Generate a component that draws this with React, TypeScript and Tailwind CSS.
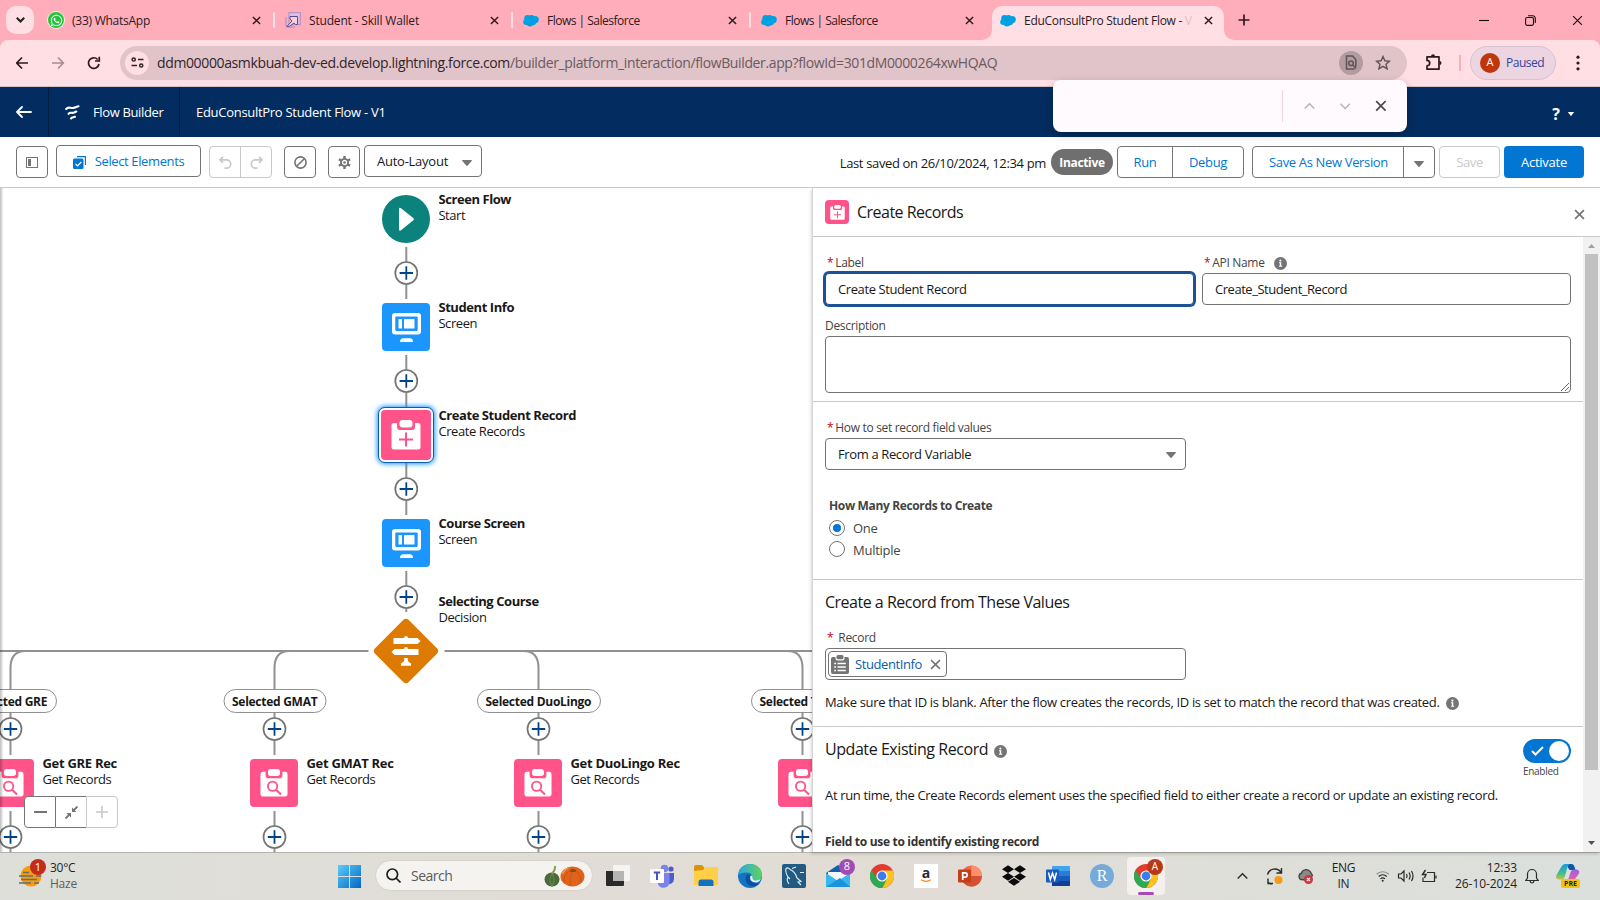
import type { ReactNode } from 'react'
import { FaDropbox, FaWhatsapp } from 'react-icons/fa'

const GREY = '#747474'

/* ---------- shared glyphs ---------- */

function Cross({ size, color, width }: { size: number; color: string; width: number }) {
  return (
    <svg width={size} height={size} viewBox="0 0 10 10" fill="none" stroke={color} strokeWidth={width} className="shrink-0">
      <path d="M1 1l8 8M9 1l-8 8" />
    </svg>
  )
}

function Cloud() {
  return (
    <svg width="16" height="13" viewBox="0 0 16 13" fill="#00a1e0" className="shrink-0">
      <circle cx="4.6" cy="4.3" r="3.3" />
      <circle cx="8.6" cy="4" r="3" />
      <circle cx="12.2" cy="5.6" r="3.6" />
      <circle cx="3.2" cy="7.9" r="3" />
      <circle cx="7" cy="9.2" r="3.3" />
      <circle cx="10" cy="8.3" r="3" />
    </svg>
  )
}

function Down({ color = GREY, w = 10, h = 6 }: { color?: string; w?: number; h?: number }) {
  return (
    <svg width={w} height={h} viewBox="0 0 10 6" preserveAspectRatio="none" className="shrink-0">
      <path d="M.6 0h8.8q.8.2.3.9L5.5 5.7q-.5.5-1 0L.3.9Q-.2.2.6 0z" fill={color} />
    </svg>
  )
}

function Info() {
  return (
    <svg width="13" height="13" viewBox="0 0 13 13" className="shrink-0">
      <circle cx="6.5" cy="6.5" r="6.5" fill={GREY} />
      <circle cx="6.4" cy="3.6" r="1.1" fill="#fff" />
      <path d="M5 5.3h2.300v3.500h.9v1H5V8.800h.8V6.300H5z" fill="#fff" />
    </svg>
  )
}

function Clipboard({ mark, size, bg }: { mark: 'plus' | 'search'; size: number; bg: string }) {
  return (
    <svg width={size} height={size} viewBox="0 0 30 30" className="shrink-0">
      <path d="M3 3h24a2.500 2.500 0 0 1 2.500 2.500v21.500a2.500 2.500 0 0 1-2.500 2.500H3A2.500 2.500 0 0 1 .5 27V5.500A2.500 2.500 0 0 1 3 3z" fill="#fff" />
      <path d="M6 1.500h18v5.500a3 3 0 0 1-3 3H9a3 3 0 0 1-3-3z" fill={bg} />
      <rect x="8.500" y="0" width="13" height="7.500" rx="3.200" fill="#fff" />
      {mark === 'plus' ? (
        <path d="M15 12.500v14M8 19.500h14" stroke={bg} strokeWidth="2" />
      ) : (
        <g stroke={bg} fill="none">
          <circle cx="13.500" cy="18.500" r="5" strokeWidth="2" />
          <path d="M17.200 22.200l5.300 5" strokeWidth="2.200" />
        </g>
      )}
    </svg>
  )
}

/* ---------- browser chrome ---------- */

const tabs: { title: string; width: string; icon: ReactNode; tracking: string }[] = [
  {
    title: '(33) WhatsApp',
    width: 'w-[233px]',
    tracking: 'tracking-[-0.25px]',
    icon: (
      <span className="flex size-4 items-center justify-center rounded-full bg-[#25c43c] text-white ring-1 ring-white/70">
        <FaWhatsapp size={13} />
      </span>
    ),
  },
  {
    title: 'Student - Skill Wallet',
    width: 'w-[238px]',
    tracking: 'tracking-[-0.18px]',
    icon: (
      <svg width="16" height="16" viewBox="0 0 16 16" fill="none" stroke="#5b4a86" strokeWidth="1">
        <rect x="4" y=".7" width="11.300" height="12" fill="#e6bdd6" stroke="#a08fcb" />
        <path d="M1 5v10h9" stroke="#a08ac2" />
        <path d="M2 14.300l5-5.300-2-2V4.500h7.500v8h-2L9 11l-4.500 3.300z" fill="#f7cfdc" />
      </svg>
    ),
  },
  { title: 'Flows | Salesforce', width: 'w-[238px]', tracking: 'tracking-[-0.5px]', icon: <Cloud /> },
  { title: 'Flows | Salesforce', width: 'w-[241px]', tracking: 'tracking-[-0.5px]', icon: <Cloud /> },
]

function TabStrip() {
  return (
    <div className="flex h-10 bg-[#ffadbb] text-[12px] text-[#2c1a1e]">
      <div className="mt-[6px] ml-[6px] flex size-7 shrink-0 items-center justify-center rounded-[10px] bg-[#ffdee4]">
        <svg width="9" height="6" viewBox="0 0 9 6" fill="none" stroke="#1f1f1f" strokeWidth="2">
          <path d="M.8.8l3.700 3.700L8.200.8" />
        </svg>
      </div>
      <div className="flex pl-[8px]">
        {tabs.map((t, i) => (
          <div key={i} className={`${t.width} flex items-center`}>
            <div className={`flex flex-1 items-center ${i === 0 ? 'pl-[6px]' : 'pl-[10px]'} ${i === 3 ? 'pr-[18px]' : 'pr-[12px]'}`}>
              <div className="flex w-4 justify-center">{t.icon}</div>
              <span className={`mt-[2px] ml-[8px] grow ${t.tracking}`}>{t.title}</span>
              <Cross size={9} color="#2c1a1e" width={1.6} />
            </div>
            {i < 3 && <span className="h-4 w-[2px] shrink-0 rounded bg-[#ffdee4]" />}
          </div>
        ))}
      </div>
      <div className="relative mt-[6px] flex h-[34px] w-[232px] items-center rounded-t-[10px] bg-[#ffdee4] pr-[11px] pl-2">
        <svg width="10" height="10" className="absolute bottom-0 -left-[10px]">
          <path d="M10 0v10H0A10 10 0 0 0 10 0z" fill="#ffdee4" />
        </svg>
        <svg width="10" height="10" className="absolute -right-[10px] bottom-0">
          <path d="M0 0v10h10A10 10 0 0 1 0 0z" fill="#ffdee4" />
        </svg>
        <div className="-mt-[6px] flex grow items-center">
          <Cloud />
          <span className="mt-[2px] mr-auto ml-[8px] whitespace-nowrap tracking-[-0.29px]">
            EduConsultPro Student Flow - <span className="text-[#d8c1c6]">V</span>
          </span>
          <Cross size={9} color="#2c1a1e" width={1.6} />
        </div>
      </div>
      <div className="flex grow items-center">
        <svg width="12" height="12" viewBox="0 0 12 12" stroke="#2c1a1e" strokeWidth="1.700" className="ml-[14px]">
          <path d="M6 .5v11M.5 6h11" />
        </svg>
        <div className="ml-auto flex items-center gap-[36px] pr-[17px]">
          <svg width="10" height="10" stroke="#111" strokeWidth="1.100">
            <path d="M0 5.500h10" />
          </svg>
          <svg width="11" height="11" viewBox="0 0 11 11" fill="none" stroke="#111" strokeWidth="1.100">
            <rect x=".6" y="2.500" width="7.900" height="7.900" rx="1.600" />
            <path d="M3 .8h4.800a2.500 2.500 0 0 1 2.500 2.500v4.700" />
          </svg>
          <Cross size={11} color="#111" width={1} />
        </div>
      </div>
    </div>
  )
}

function AddressBar() {
  return (
    <div className="flex h-[47px] items-center rounded-t-[8px] border-b border-[#d3bfc6] bg-[#ffdee4]">
      <svg width="104" height="16" viewBox="0 0 104 16" fill="none" strokeWidth="1.700" className="-mt-px ml-4">
        <path d="M12 8H.8M6 2.500L.7 8 6 13.500" stroke="#2c1a1e" />
        <path d="M36 8h11.200M42 2.500L47.300 8 42 13.500" stroke="#a98c93" />
        <path d="M83 9a5.300 5.300 0 1 1-1.300-4.500M83.300 1.800V6H79" stroke="#2c1a1e" />
      </svg>
      <div className="-mt-px flex h-[34px] w-[1287px] items-center rounded-full bg-[#e0c4c9] pr-[16px] pl-[5px]">
        <div className="flex size-6 items-center justify-center rounded-full bg-[#ffdee4]">
          <svg width="13" height="11" viewBox="0 0 13 11" fill="none" stroke="#33252a" strokeWidth="1.500">
            <circle cx="2.700" cy="2.500" r="1.600" />
            <path d="M7 2.500h5.500M.5 8.500H6" />
            <circle cx="10.200" cy="8.500" r="1.600" />
          </svg>
        </div>
        <span className="ml-[8px] text-[14px] tracking-[-0.37px] whitespace-nowrap text-[#6b5a5e]">
          <span className="text-[#33252a]">ddm00000asmkbuah-dev-ed.develop.lightning.force.com</span>
          /builder_platform_interaction/flowBuilder.app?flowId=301dM0000264xwHQAQ
        </span>
        <div className="ml-auto flex size-6 items-center justify-center rounded-full bg-[#b29ca1]">
          <svg width="12" height="15" viewBox="0 0 12 15" fill="none" stroke="#5f5357" strokeWidth="1.500">
            <path d="M10.800 12V4.500L7.500 1H1.500v13h8" />
            <circle cx="6" cy="8.300" r="2.300" />
            <path d="M7.700 10l3.300 3.500" />
          </svg>
        </div>
        <svg width="16" height="15" viewBox="0 0 16 15" fill="none" stroke="#5f5357" strokeWidth="1.400" className="ml-[12px]">
          <path d="M8 1.500l1.900 4.300 4.600.4-3.500 3 1.100 4.600L8 11.300l-4.100 2.500L5 9.200l-3.500-3 4.600-.4z" />
        </svg>
      </div>
      <svg width="18" height="18" viewBox="0 0 18 18" fill="none" stroke="#2c1a1e" strokeWidth="1.700" className="-mt-[2px] ml-[18px]">
        <path d="M2 3.800h12v12.400H2v-3.400a2.700 2.700 0 0 0 0-5.400z" strokeLinejoin="round" />
        <path d="M6 3.300a2 2 0 0 1 4 0zM14.500 8a2 2 0 0 1 0 4z" fill="#2c1a1e" stroke="none" />
      </svg>
      <span className="ml-[16px] h-4 w-[2px] bg-[#ffadbb]" />
      <div className="-mt-px ml-[9px] flex h-[34px] w-[86px] items-center rounded-full border border-[#d8c1d2] bg-[#ecd4e0] pl-[9px]">
        <span className="flex size-5 items-center justify-center rounded-full bg-[#bf360c] text-[11px] text-white">A</span>
        <span className="ml-[6px] text-[12px] tracking-[-0.5px] text-[#33449c]">Paused</span>
      </div>
      <svg width="4" height="16" fill="#2c1a1e" className="-mt-px ml-[20px]">
        <circle cx="2" cy="2.200" r="1.600" />
        <circle cx="2" cy="8" r="1.600" />
        <circle cx="2" cy="13.800" r="1.600" />
      </svg>
    </div>
  )
}

function FindBar() {
  return (
    <div className="absolute top-[80px] left-[1053px] z-20 flex h-[52px] w-[354px] items-center rounded-[8px] bg-[#fffafe] pl-[229px] shadow-[0_3px_10px_rgba(0,0,0,0.22)]">
      <span className="h-8 w-px bg-[#f6d3db]" />
      <svg width="84" height="12" viewBox="0 0 84 12" fill="none" strokeWidth="1.500" className="ml-[21px]">
        <path d="M.8 8.500L5.500 3.800l4.700 4.700" stroke="#b9b3b7" />
        <path d="M36.500 3.800l4.700 4.700 4.700-4.700" stroke="#b9b3b7" />
        <path d="M72.200 1.200l9.400 9.400M81.600 1.200l-9.400 9.400" stroke="#4c474a" strokeWidth="1.700" />
      </svg>
    </div>
  )
}

/* ---------- builder header and toolbar ---------- */

function Header() {
  return (
    <header className="flex h-[50px] items-stretch bg-[#032d60] text-[13px] text-white">
      <div className="flex w-[49px] items-center justify-center border-r border-[#021d43]">
        <svg width="16" height="12" viewBox="0 0 16 12" fill="none" stroke="#fff" strokeWidth="1.800" strokeLinecap="round" strokeLinejoin="round">
          <path d="M15 6H1M6 1L1 6l5 5" />
        </svg>
      </div>
      <div className="flex w-[131px] items-center border-r border-[#021d43] pl-[16px]">
        <svg width="15" height="15" viewBox="0 0 15 15" fill="none" stroke="#fff" strokeWidth="2.100" strokeLinecap="round">
          <path d="M1.200 4C3.500 1 5.500 3.500 8 3s3.500-1.300 5.500-1.800" />
          <path d="M3.500 8.800c1.600-2 3.200-.6 4.800-1s2-.9 3-1.300" />
          <path d="M6 13.500c1.200-1.500 2-1 4-1.700" />
        </svg>
        <span className="mt-[2px] ml-[13px] tracking-[-0.36px]">Flow Builder</span>
      </div>
      <div className="flex items-center pt-[2px] pl-4 tracking-[-0.29px]">EduConsultPro Student Flow - V1</div>
      <div className="ml-auto flex items-center gap-[8px] pt-[4px] pr-[26px]">
        <span className="text-[16px] font-bold">?</span>
        <Down color="#fff" w={6} h={4} />
      </div>
    </header>
  )
}

const btn = 'flex h-8 items-center justify-center border border-[#747474] bg-white'

function Toolbar() {
  return (
    <div className="flex h-[51px] items-center border-b border-[#c9c9c9] bg-white pr-4 pl-4 text-[13px] tracking-[-0.35px] text-[#181818]">
      <div className={`${btn} w-8 rounded-[4px]`}>
        <svg width="12" height="11" viewBox="0 0 12 11">
          <rect x=".5" y=".5" width="11" height="10" fill="none" stroke={GREY} />
          <rect x="2" y="2" width="3" height="7" fill={GREY} />
        </svg>
      </div>
      <div className={`${btn} -mt-[2px] ml-2 w-[145px] rounded-[4px] text-[#0176d3]`}>
        <svg width="13" height="13" viewBox="0 0 13 13" className="mt-[2px] mr-[9px]">
          <path d="M4 .5h8.500V9" fill="none" stroke="#0176d3" strokeWidth="1.300" />
          <rect y="2.500" width="10.500" height="10.500" rx="1.500" fill="#0176d3" />
          <path d="M2.500 7.800l2 2L8.300 6" fill="none" stroke="#fff" strokeWidth="1.200" />
        </svg>
        <span className="mt-[2px] tracking-[-0.38px]">Select Elements</span>
      </div>
      <div className="ml-2 flex h-8 w-[63px] divide-x divide-[#c9c9c9] rounded-[4px] border border-[#c9c9c9]">
        {[false, true].map((flip) => (
          <div key={String(flip)} className="flex flex-1 items-center justify-center">
            <svg width="13" height="13" viewBox="0 0 13 13" fill="none" stroke="#c9c9c9" strokeWidth="1.700" className={flip ? '-scale-x-100' : ''}>
              <path d="M4 .8L1 3.800l3 3M1 3.800h6.500a4.200 4.200 0 0 1 0 8.400H5.500" />
            </svg>
          </div>
        ))}
      </div>
      <div className={`${btn} ml-3 w-8 rounded-[4px]`}>
        <svg width="13" height="13" viewBox="0 0 13 13" fill="none" stroke={GREY} strokeWidth="1.600">
          <circle cx="6.500" cy="6.500" r="5.600" />
          <path d="M2.700 10.300l7.600-7.600" />
        </svg>
      </div>
      <div className={`${btn} ml-3 w-8 rounded-[4px]`}>
        <svg width="13" height="13" viewBox="0 0 13 13" fill="none" stroke={GREY}>
          <circle cx="6.500" cy="6.500" r="3.600" strokeWidth="1.900" />
          <circle cx="6.500" cy="6.500" r="1.300" fill={GREY} stroke="none" />
          <path d="M6.500 0v2.500M6.500 10.500V13M.9 3.200l2.200 1.300M9.900 8.500l2.200 1.300M.9 9.800l2.200-1.300M9.900 4.500l2.200-1.300" strokeWidth="2.400" />
        </svg>
      </div>
      <div className={`${btn} -mt-[2px] ml-1 w-[118px] rounded-[4px] pl-[3px]`}>
        <span className="mt-[2px] tracking-[-0.25px]">Auto-Layout</span>
        <span className="mt-[3px] ml-[14px] flex">
          <Down />
        </span>
      </div>

      <span className="mt-[3px] ml-auto">Last saved on 26/10/2024, 12:34 pm</span>
      <span className="ml-[5px] flex h-[26px] w-[62px] items-center justify-center rounded-full bg-[#6f6f6f] pt-[2px] text-[12px] font-bold text-white">
        Inactive
      </span>
      <div className={`${btn} ml-[4px] w-[127px] divide-x divide-[#747474] rounded-[4px] text-[#0176d3]`}>
        <span className="flex h-full w-[55px] items-center justify-center pt-[2px]">Run</span>
        <span className="flex h-full grow items-center justify-center pt-[2px]">Debug</span>
      </div>
      <div className={`${btn} ml-2 w-[183px] divide-x divide-[#747474] rounded-[4px] text-[#0176d3]`}>
        <span className="flex h-full grow items-center justify-center pt-[2px] pl-px">Save As New Version</span>
        <span className="flex h-full w-[30px] items-center justify-center pt-[3px]">
          <Down />
        </span>
      </div>
      <div className="ml-1 flex h-8 w-[61px] items-center justify-center rounded-[4px] border border-[#c9c9c9] pt-[2px] text-[#c9c9c9]">Save</div>
      <div className="ml-1 flex h-8 w-[80px] items-center justify-center rounded-[4px] bg-[#0176d3] pt-[2px] tracking-[-0.25px] text-white">
        Activate
      </div>
    </div>
  )
}

/* ---------- flow canvas (origin is the canvas' top left corner) ---------- */

type Kind = 'start' | 'screen' | 'create' | 'get' | 'decision'
const nodes: { x: number; y: number; kind: Kind; title: string; sub: string }[] = [
  { x: 406, y: 31, kind: 'start', title: 'Screen Flow', sub: 'Start' },
  { x: 406, y: 139, kind: 'screen', title: 'Student Info', sub: 'Screen' },
  { x: 406, y: 247, kind: 'create', title: 'Create Student Record', sub: 'Create Records' },
  { x: 406, y: 355, kind: 'screen', title: 'Course Screen', sub: 'Screen' },
  { x: 406, y: 463, kind: 'decision', title: 'Selecting Course', sub: 'Decision' },
  { x: 10, y: 595, kind: 'get', title: 'Get GRE Rec', sub: 'Get Records' },
  { x: 274, y: 595, kind: 'get', title: 'Get GMAT Rec', sub: 'Get Records' },
  { x: 538, y: 595, kind: 'get', title: 'Get DuoLingo Rec', sub: 'Get Records' },
  { x: 802, y: 595, kind: 'get', title: '', sub: '' },
]
const branches = [
  { x: 10.5, label: 'Selected GRE', side: 1, width: 'w-[92px]' },
  { x: 274.5, label: 'Selected GMAT', side: 1, width: 'w-[103px]' },
  { x: 538.5, label: 'Selected DuoLingo', side: -1, width: 'w-[124px]' },
  { x: 802.5, label: 'Selected T', side: -1, width: 'w-[104px]' },
]
const adders = [
  ...[85, 193, 301, 409].map((y) => ({ x: 406.3, y })),
  ...branches.flatMap((b) => [
    { x: b.x, y: 541 },
    { x: b.x, y: 649 },
  ]),
]
const segments = [
  [406.3, 59, 111],
  [406.3, 167, 219],
  [406.3, 275, 327],
  [406.3, 383, 424],
  ...branches.flatMap((b) => [
    [b.x, 520, 567],
    [b.x, 623, 664],
  ]),
]

function NodeIcon({ kind }: { kind: Kind }) {
  if (kind === 'start')
    return (
      <svg width="48" height="48" viewBox="0 0 48 48">
        <circle cx="24" cy="24" r="24" fill="#0b827c" />
        <path d="M17 14.200q0-2.400 2-.9L31.300 23q1.200 1.100 0 2.200L19 35.300q-2 1.300-2-1.100z" fill="#fff" />
      </svg>
    )
  if (kind === 'screen')
    return (
      <div className="flex size-12 items-start justify-center rounded-[4px] bg-[#1b96ff] pt-[10px]">
        <svg width="29" height="29" viewBox="0 0 29 29">
          <rect width="29" height="21.500" rx="3" fill="#fff" />
          <rect x="3.300" y="3.500" width="22.400" height="14.500" rx="1" fill="#1b96ff" />
          <rect x="6.500" y="6" width="3.500" height="9.500" rx=".6" fill="#fff" />
          <rect x="12" y="6" width="10.500" height="9.500" rx=".6" fill="#fff" />
          <path d="M10.500 25.200h8q2.500.6 2.500 3.800H8q0-3.200 2.500-3.800z" fill="#fff" />
        </svg>
      </div>
    )
  if (kind === 'create')
    return (
      <div className="rounded-[7px] border border-[#0b5cab] bg-white p-[2px] shadow-[0_0_5px_1px_#1b96ff]">
        <div className="flex size-[50px] items-center justify-center rounded-[4px] bg-[#ff538a]">
          <Clipboard mark="plus" size={30} bg="#ff538a" />
        </div>
      </div>
    )
  if (kind === 'get')
    return (
      <div className="flex size-12 items-center justify-center rounded-[4px] bg-[#ff538a]">
        <Clipboard mark="search" size={28} bg="#ff538a" />
      </div>
    )
  return (
    <svg width="66" height="66" viewBox="0 0 66 66">
      <path d="M30.500 1.800q2.500-2.200 5 0L64.200 30.500q2.200 2.500 0 5L35.500 64.200q-2.500 2.200-5 0L1.800 35.500q-2.200-2.500 0-5z" fill="#dd7a01" />
      <path d="M20.500 20H31q0-2 2-2t2 2h9.500l3 3-3 3h-24zM45.500 31H35q0-2-2-2t-2 2h-9.500l-3 3 3 3h24zM31.300 40h3.400v2q0 1.500 3.300 3.500v2.300H28v-2.300q3.300-2 3.300-3.500z" fill="#fff" />
    </svg>
  )
}

function Canvas() {
  return (
    <div className="relative w-[812px] shrink-0 overflow-hidden bg-white tracking-[-0.42px] text-[#181818]">
      <svg width="812" height="664" className="absolute inset-0" fill="none" stroke="#919191" strokeWidth="2">
        <path d="M0 463H368.500M444.500 463H812" />
        {segments.map(([x, a, b], i) => (
          <path key={i} d={`M${x} ${a}V${b}`} />
        ))}
        {branches.map((b) => (
          <path key={b.x} d={`M${b.x + b.side * 15} 463Q${b.x} 463 ${b.x} 480V502`} />
        ))}
        {adders.map((a) => (
          <g key={`${a.x}-${a.y}`}>
            <circle cx={a.x} cy={a.y} r="11" fill="#fff" stroke="#747474" strokeWidth="1.700" />
            <path d={`M${a.x - 6.7} ${a.y}h13.400M${a.x} ${a.y - 6.7}v13.400`} stroke="#014486" strokeWidth="1.800" />
          </g>
        ))}
      </svg>
      {nodes.map((n, i) => (
        <div key={i} className="absolute" style={{ left: n.x, top: n.y }}>
          <div className="absolute -translate-x-1/2 -translate-y-1/2">
            <NodeIcon kind={n.kind} />
          </div>
          <div className={`absolute left-[32.4px] text-[13px] leading-4 whitespace-nowrap ${n.kind === 'decision' ? '-top-[58px]' : '-top-[28px]'}`}>
            <div className={`font-bold ${n.kind === 'get' ? 'tracking-[-0.28px]' : ''}`}>{n.title}</div>
            <div>{n.sub}</div>
          </div>
        </div>
      ))}
      {branches.map((b) => (
        <div
          key={b.x}
          className={`${b.width} absolute top-[501px] flex h-6 -translate-x-1/2 items-center rounded-full border border-[#919191] bg-white pt-px pl-[8px] text-[12px] font-bold tracking-[-0.27px] whitespace-nowrap`}
          style={{ left: b.x }}
        >
          {b.label}
        </div>
      ))}
      <div className="absolute top-[608px] left-[24px] flex h-8 w-[94px]">
        <div className="flex w-[32px] items-center justify-center rounded-l-[4px] border border-[#747474] bg-white">
          <span className="h-[2px] w-[13px] bg-[#747474]" />
        </div>
        <div className="flex w-[30px] items-center justify-center border-y border-[#747474] bg-white">
          <svg width="13" height="13" viewBox="0 0 13 13" fill="none" stroke={GREY} strokeWidth="1.800">
            <path d="M12.500.5L8 5M.5 12.500L5 8" />
            <path d="M7 1.500V6h4.500zM6 11.500V7H1.500z" fill={GREY} stroke="none" />
          </svg>
        </div>
        <div className="flex w-[32px] items-center justify-center rounded-r-[4px] border border-[#c9c9c9] bg-white">
          <svg width="12" height="12" stroke="#c9c9c9" strokeWidth="1.600">
            <path d="M6 0v12M0 6h12" />
          </svg>
        </div>
      </div>
      <div className="absolute inset-y-0 left-0 w-[3px] bg-gradient-to-r from-black/25 to-black/5" />
    </div>
  )
}

/* ---------- property panel ---------- */

function Star() {
  return <span className="mr-[2px] text-[#ba0517]">*</span>
}

const field = 'rounded-[4px] border border-[#747474] bg-white'
const label = 'flex items-center text-[12px] leading-4 tracking-[-0.32px] text-[#444]'

function Panel() {
  return (
    <aside className="z-10 flex w-[788px] shrink-0 flex-col border-l border-[#d4d4d4] bg-white text-[13px] text-[#181818] shadow-[-1px_2px_3px_rgba(0,0,0,0.16)]">
      <div className="flex h-[49px] shrink-0 items-center border-b border-[#c9c9c9] pr-[15px] pl-3">
        <div className="flex size-6 items-center justify-center rounded-[4px] bg-[#ff538a]">
          <Clipboard mark="plus" size={15} bg="#ff538a" />
        </div>
        <span className="ml-2 text-[16px] tracking-[-0.52px]">Create Records</span>
        <span className="mt-[4px] ml-auto">
          <Cross size={11} color={GREY} width={1.5} />
        </span>
      </div>
      <div className="flex min-h-0 grow">
        <div className="min-w-0 grow overflow-hidden">
          <section className="h-[165px] border-b border-[#c9c9c9] pt-[18px] pr-[12px] pl-3">
            <div className="flex gap-2">
              <div className="w-[369px]">
                <div className={`${label} pl-[2px]`}>
                  <Star />
                  Label
                </div>
                <div className="mt-[2px] flex h-8 items-center rounded-[4px] border border-[#1b5297] bg-white px-[12px] pt-[2px] tracking-[-0.4px] shadow-[0_0_0_2px_#1b5297]">
                  Create Student Record
                </div>
              </div>
              <div className="w-[369px]">
                <div className={`${label} pl-[2px]`}>
                  <Star />
                  API Name
                  <span className="ml-[9px]">
                    <Info />
                  </span>
                </div>
                <div className={`${field} mt-[2px] flex h-8 items-center px-[12px] pt-[2px] tracking-[-0.46px]`}>Create_Student_Record</div>
              </div>
            </div>
            <div className={`${label} mt-[13px]`}>Description</div>
            <div className={`${field} mt-[2px] flex h-[57px] items-end justify-end`}>
              <svg width="10" height="10" stroke="#6a6a6a" strokeWidth="1">
                <path d="M1 9l8-8M5 9l4-4" />
              </svg>
            </div>
          </section>

          <section className="h-[178px] border-b border-[#c9c9c9] pt-[18px] pl-3">
            <div className={`${label} pl-[2px]`}>
              <Star />
              How to set record field values
            </div>
            <div className={`${field} mt-[2px] flex h-8 w-[361px] items-center justify-between pr-[9px] pl-[12px]`}>
              <span className="mt-[2px] tracking-[-0.37px]">From a Record Variable</span>
              <span className="mt-[2px]">
                <Down />
              </span>
            </div>
            <div className="pl-[4px] text-[#444]">
              <div className="mt-[28px] text-[12px] leading-4 font-bold tracking-[-0.36px]">How Many Records to Create</div>
              <div className="mt-[4px] flex h-[21px] items-center">
                <span className="-mt-px flex size-4 items-center justify-center rounded-full border border-[#747474]">
                  <span className="size-2 rounded-full bg-[#0176d3]" />
                </span>
                <span className="ml-2 tracking-[-0.3px]">One</span>
              </div>
              <div className="flex h-[22px] items-center">
                <span className="-mt-[2px] size-4 rounded-full border border-[#747474]" />
                <span className="mt-px ml-2 tracking-[-0.27px]">Multiple</span>
              </div>
            </div>
          </section>

          <section className="h-[147px] border-b border-[#c9c9c9] pt-[11px] pl-3">
            <div className="-mt-px text-[16px] leading-6 tracking-[-0.5px]">Create a Record from These Values</div>
            <div className={`${label} mt-[16px] pl-[2px]`}>
              <Star />
              <span className="ml-[3px]">Record</span>
            </div>
            <div className={`${field} mt-[2px] flex h-8 w-[361px] items-center pl-[2px]`}>
              <div className="flex h-[26px] w-[119px] items-center rounded-[4px] border border-[#747474] pl-[2px]">
                <svg width="18" height="19" viewBox="0 0 18 19">
                  <path d="M2 2h2.500v1.500q0 2 2 2h5q2 0 2-2V2H16q2 0 2 2v13q0 2-2 2H2q-2 0-2-2V4q0-2 2-2z" fill={GREY} />
                  <rect x="5.500" width="7" height="4.300" rx="1.500" fill={GREY} />
                  <path d="M3.200 8.500h1.800M6.500 8.500h8.300M3.200 12h1.800M6.500 12h8.300M3.200 15.500h1.800M6.500 15.500h8.300" stroke="#fff" strokeWidth="1.400" />
                </svg>
                <span className="mt-[2px] mr-[8px] ml-[6px] tracking-[-0.4px] text-[#0b5cab]">StudentInfo</span>
                <Cross size={11} color={GREY} width={1.4} />
              </div>
            </div>
            <div className="mt-[14px] flex items-center leading-4 tracking-[-0.335px] whitespace-nowrap">
              Make sure that ID is blank. After the flow creates the records, ID is set to match the record that was created.
              <span className="mt-[3px] ml-[6px]">
                <Info />
              </span>
            </div>
          </section>

          <section className="pt-[11px] pr-[12px] pl-3">
            <div className="flex items-start justify-between">
              <div className="-mt-px flex items-center text-[16px] leading-6 tracking-[-0.44px]">
                Update Existing Record
                <span className="mt-[4px] ml-[6px]">
                  <Info />
                </span>
              </div>
              <div className="mt-px w-12">
                <div className="flex h-6 items-center justify-end rounded-full bg-[#0176d3] pr-[2px]">
                  <svg width="13" height="10" viewBox="0 0 13 10" fill="none" stroke="#fff" strokeWidth="2" className="mr-[5px]">
                    <path d="M1 5l3.500 3.500L12 1" />
                  </svg>
                  <span className="size-5 rounded-full bg-white" />
                </div>
                <div className="text-[10px] leading-4 tracking-[-0.3px] text-[#444]">Enabled</div>
              </div>
            </div>
            <div className="mt-[8px] leading-4 tracking-[-0.335px] whitespace-nowrap">
              At run time, the Create Records element uses the specified field to either create a record or update an existing record.
            </div>
            <div className="mt-[31px] text-[12px] leading-4 font-bold tracking-[-0.31px] text-[#333]">
              Field to use to identify existing record
            </div>
          </section>
        </div>
        <div className="flex w-[17px] shrink-0 flex-col items-center justify-between bg-[#f1f1f1] pt-[7px] pb-[7px]">
          <svg width="7" height="4">
            <path d="M0 4l3.500-4L7 4z" fill="#a3a3a3" />
          </svg>
          <div className="mt-[6px] mb-auto h-[516px] w-[13px] bg-[#c1c1c1]" />
          <svg width="7" height="4">
            <path d="M0 0l3.500 4L7 0z" fill="#505050" />
          </svg>
        </div>
      </div>
    </aside>
  )
}

/* ---------- taskbar ---------- */

function Chrome() {
  return (
    <svg width="24" height="24" viewBox="0 0 24 24">
      <circle cx="12" cy="12" r="12" fill="#e33b2e" />
      <path d="M17.200 9H23.600A12 12 0 0 1 12 24L17.200 15z" fill="#fcc31e" />
      <path d="M12 6.500h10.700q.7 1.200.9 2.500.8 5-1.600 9l-6 3z" fill="#fcc31e" />
      <path d="M1.600 6A12 12 0 0 0 12 24l5-9-5 2.500-4.800-2.500z" fill="#2da94f" />
      <circle cx="12" cy="12" r="5.600" fill="#fff" />
      <circle cx="12" cy="12" r="4.400" fill="#3b7ded" />
    </svg>
  )
}

const apps: ReactNode[] = [
  <svg width="24" height="24" viewBox="0 0 24 24">
    <rect x="7" y="1" width="17" height="16" rx="1" fill="#f4f4f2" />
    <path d="M0 7h18v14a1 1 0 0 1-1 1H1a1 1 0 0 1-1-1z" fill="#2a2a2a" />
    <path d="M7 7h11v10H7z" fill="#b5b5b3" />
  </svg>,
  <svg width="24" height="24" viewBox="0 0 24 24">
    <circle cx="14.500" cy="4.500" r="3.800" fill="#7b83eb" />
    <circle cx="21" cy="5" r="2.600" fill="#5059c9" />
    <path d="M16 9h8v6a5 5 0 0 1-8 4z" fill="#5059c9" />
    <path d="M8 9h11.500v8a6 6 0 0 1-11.500 3z" fill="#7b83eb" />
    <rect y="5" width="14" height="14" rx="1" fill="#fff" />
    <path d="M3.800 8.500h6.400M7 8.500V16" stroke="#4b53bc" strokeWidth="2" />
  </svg>,
  <svg width="24" height="24" viewBox="0 0 24 24">
    <path d="M0 3q0-2 2-2h6l2.500 3v4H0z" fill="#d8930a" />
    <path d="M0 7l9-1 2-3h13v18H0z" fill="#ffcf48" />
    <path d="M4.500 22v-4q0-2.500 2.500-2.500h10q2.500 0 2.500 2.500v4z" fill="#1272bd" />
  </svg>,
  <svg width="24" height="24" viewBox="0 0 24 24">
    <defs>
      <linearGradient id="edgeTop" x1="0" x2="1">
        <stop offset="0" stopColor="#2aa9e0" />
        <stop offset="1" stopColor="#5fd35c" />
      </linearGradient>
    </defs>
    <circle cx="12" cy="12" r="12" fill="#1275c4" />
    <path d="M.3 11C1 4.500 6 0 12 0c7 0 12 5 12 10.500 0 4-3 6-6.500 6-2.500 0-4-1-3.500-2.500 1-2-.5-5.500-5-5.500C5 8.500 1.500 9.500.3 11z" fill="url(#edgeTop)" />
    <path d="M9 10.500c-3 4-1 10 4 11.500 4 .8 7-1 9-3.500-4 1.500-8.500.5-10-2.500-.8-1.800-.3-3 .5-4-.9-1.100-2.500-1.500-3.500-1.500z" fill="#104f9e" />
    <path d="M12.500 12q2-1.500 2 1-.8 2.500 3 3.500 3.500 0 5.500-2-1 3-3.500 3.800c-4 1-8.800-2-7-6.300z" fill="#e9eef0" />
  </svg>,
  <svg width="24" height="24" viewBox="0 0 24 24" fill="none" stroke="#e6eef5" strokeWidth="1.100">
    <rect width="24" height="24" rx="2" fill="#235a81" stroke="none" />
    <path d="M7 20q-3-4-1-7Q3 8 4 4.500q2-1.500 4 1c4 1.500 6 5 7 8.500l4 3.500-3 .5 3 3M18 8.500h4M6 13l2 2M10 4.500l4-1.500" />
  </svg>,
  <div className="relative size-6">
    <svg width="24" height="24" viewBox="0 0 24 24">
      <path d="M0 9L12 1l12 8v4H0z" fill="#0f62ae" />
      <path d="M2 8h20v9H2z" fill="#f5f9fc" />
      <path d="M0 9l12 8 12-8v14H0z" fill="#38b6ee" />
      <path d="M0 23l14-9 10 9z" fill="#1b93dc" />
    </svg>
    <span className="absolute -top-[5px] left-[13px] flex size-4 items-center justify-center rounded-full bg-[#a34bb5] text-[11px] text-white">8</span>
  </div>,
  <Chrome />,
  <div className="flex size-6 flex-col items-center bg-white">
    <span className="h-[15px] text-[14px] leading-[18px] font-bold text-[#222b3b]">a</span>
    <svg width="12" height="4" fill="none" stroke="#f08c1d" strokeWidth="1.200">
      <path d="M1 .8q5 3.200 10 0" />
    </svg>
  </div>,
  <svg width="24" height="24" viewBox="0 0 24 24">
    <circle cx="13.500" cy="12" r="10.500" fill="#ed6c47" />
    <path d="M13.500 1.500A10.500 10.500 0 0 1 24 12H13.500z" fill="#ff8f6b" />
    <path d="M3 12h21a10.500 10.500 0 0 1-20 4.500z" fill="#d35230" />
    <rect y="5.500" width="13" height="13" rx="1" fill="#c43e1c" />
    <path d="M4.700 16V8.800H7a2 2 0 0 1 0 4.400H4.700" fill="none" stroke="#fff" strokeWidth="1.700" />
  </svg>,
  <FaDropbox size={25} color="#0a0a0a" />,
  <svg width="24" height="24" viewBox="0 0 24 24">
    <rect x="6" y="2" width="18" height="20" rx="1" fill="#41a5ee" />
    <path d="M6 7h18v5H6z" fill="#2b7cd3" />
    <path d="M6 12h18v5H6z" fill="#185abd" />
    <path d="M6 17h18v4q0 1-1 1H6z" fill="#103f91" />
    <rect y="5.500" width="13" height="13" rx="1" fill="#185abd" />
    <path d="M2.500 8.500l1.800 7 2.200-6.500 2.200 6.500 1.800-7" fill="none" stroke="#fff" strokeWidth="1.500" />
  </svg>,
  <div className="flex size-6 items-center justify-center rounded-full bg-[#75aadb] font-['Liberation_Serif',serif] text-[16px] text-white">R</div>,
]

function Taskbar() {
  return (
    <footer className="relative flex h-12 items-center border-t border-[#b3b3b0] bg-gradient-to-r from-[#dedfda] via-[#e2dcd4] to-[#dbe0dc] pb-[2px] text-[12px] text-[#1f1f1f]">
      <div className="flex w-[338px] items-center pl-[19px]">
        <div className="relative mt-px h-6 w-6">
          <svg width="24" height="24" viewBox="0 0 24 24">
            <circle cx="12" cy="12" r="10.500" fill="#f29d12" />
            <path d="M4 8.500h6M0 12h14M17 12h5M2 15.500h16M0 19h12M15 19h5" stroke="#6b6b6b" strokeWidth="1.700" />
          </svg>
          <span className="absolute -top-[5px] left-[11px] flex size-4 items-center justify-center rounded-full bg-[#c42b1c] text-[11px] text-white">1</span>
        </div>
        <div className="ml-[7px] leading-4 tracking-[-0.25px]">
          <div>30°C</div>
          <div className="text-[#5c5c5c]">Haze</div>
        </div>
      </div>
      <svg width="23" height="23" viewBox="0 0 23 23" className="mt-[2px] shrink-0">
        <defs>
          <linearGradient id="win" x1="0" y1="0" x2="1" y2="1">
            <stop offset="0" stopColor="#5ecbfa" />
            <stop offset="1" stopColor="#0067c5" />
          </linearGradient>
        </defs>
        <path d="M0 0h11v11H0zM12 0h11v11H12zM0 12h11v11H0zM12 12h11v11H12z" fill="url(#win)" />
      </svg>
      <div className="ml-[14px] flex h-[31px] w-[218px] items-center rounded-full border border-[#d6d3ce] bg-[#f5f3f0] pr-[7px] pl-[10px]">
        <svg width="15" height="15" viewBox="0 0 15 15" fill="none" stroke="#1f1f1f" strokeWidth="1.700">
          <circle cx="6.300" cy="6.300" r="5.300" />
          <path d="M10 10l4.500 4.500" />
        </svg>
        <span className="ml-[10px] text-[14px] tracking-[-0.5px] text-[#5a5a5a]">Search</span>
        <svg width="41" height="22" viewBox="0 0 41 22" className="ml-auto">
          <ellipse cx="8" cy="14.500" rx="7.500" ry="7" fill="#4a6a3a" />
          <path d="M8 8.500q4 6 0 13M8 8.500q-4 6 0 13" fill="none" stroke="#64824e" strokeWidth="1.300" />
          <path d="M11 1q.5 4-3 7.500" fill="none" stroke="#8c9a58" strokeWidth="2" />
          <ellipse cx="28.500" cy="11.500" rx="12" ry="10" fill="#e0631b" />
          <path d="M28.500 5q-10 3-8 12M28.500 5q10 3 8 12M28.500 5q-4 8-2 16" fill="none" stroke="#c9520f" strokeWidth=".9" />
          <ellipse cx="29" cy="5.500" rx="3" ry="1.600" fill="#8a4a1c" />
          <path d="M18.500 9q2-5 6-6" fill="none" stroke="#f59a4a" strokeWidth="1.500" />
        </svg>
      </div>
      <div className="ml-[13px] flex items-center gap-5">
        {apps.map((a, i) => (
          <div key={i} className="flex w-6 justify-center">
            {a}
          </div>
        ))}
      </div>
      <div className="relative ml-[13px] flex h-[38px] w-[38px] items-center justify-center rounded-[4px] bg-[#f3f0ed]">
        <Chrome />
        <span className="absolute top-[2px] right-[2px] flex size-4 items-center justify-center rounded-full bg-[#b93816] text-[10px] text-white">A</span>
        <span className="absolute bottom-0 left-[11px] h-[3px] w-4 rounded-full bg-[#a34bb5]" />
      </div>
      <div className="ml-auto flex items-center pr-[19px]">
        <svg width="76" height="20" viewBox="0 0 76 20" fill="none" stroke="#2b2b2b" strokeWidth="1.400">
          <path d="M.7 12.500L5.500 7.700l4.800 4.800" />
          <path d="M30.500 8.500a7.500 7.500 0 0 1 13.500-2M44.500 2v5h-5M36 17.500H31v-5M31.500 16.500l3 2" />
          <circle cx="41.500" cy="14" r="4" fill="#f59a14" stroke="none" />
          <path d="M64 13.500a3.500 3.500 0 0 1 .5-6.500 5 5 0 0 1 9-1l2 3.500-6 4.500z" fill="#8a8a8a" stroke="#444" />
          <circle cx="71.500" cy="13.500" r="4.500" fill="#d13438" stroke="none" />
          <path d="M69.900 11.900l3.200 3.200M73.100 11.900l-3.200 3.200" stroke="#fff" strokeWidth="1.200" />
        </svg>
        <div className="ml-[19px] text-center leading-4 tracking-[-0.4px]">
          <div>ENG</div>
          <div>IN</div>
        </div>
        <svg width="62" height="14" viewBox="0 0 62 14" fill="none" stroke="#2b2b2b" strokeWidth="1.200" className="ml-[21px]">
          <path d="M.7 5.200a8.600 8.600 0 0 1 12 0" stroke="#8a8a8a" />
          <path d="M2.700 7.500a5.500 5.500 0 0 1 8 0M4.500 9.800a3 3 0 0 1 4.400 0" />
          <circle cx="6.700" cy="11.800" r="1" fill="#2b2b2b" stroke="none" />
          <path d="M22.500 5H25l3-3v10l-3-3h-2.500zM30.500 5q1.200 2 0 4M33 3.500q2.200 3.500 0 7M35.500 2q3 5 0 10" />
          <path d="M51 3.500h7.500v9H47v-4M60 6.500v3" />
          <path d="M49.500 1l-3 4.500h3.500l-1.500 3.500" strokeWidth="1.400" />
        </svg>
        <div className="ml-[17px] text-right leading-4 tracking-[-0.06px]">
          <div>12:33</div>
          <div>26-10-2024</div>
        </div>
        <svg width="14" height="16" viewBox="0 0 14 16" fill="none" stroke="#2b2b2b" strokeWidth="1.200" className="ml-[8px]">
          <path d="M2.500 10V6a4.500 4.500 0 0 1 9 0v4l1.700 2.500H.8zM5 13q.5 2 2 2t2-2" />
        </svg>
        <div className="relative ml-[17px] flex h-[24px] w-[25px] items-start">
          <svg width="24" height="22" viewBox="0 0 24 22">
            <defs>
              <linearGradient id="pilotLeft" x1="0" y1="0" x2="0" y2="1">
                <stop offset="0" stopColor="#1a9be0" />
                <stop offset=".6" stopColor="#3fbf8f" />
                <stop offset="1" stopColor="#c9c23a" />
              </linearGradient>
              <linearGradient id="pilotRight" x1="0" y1="0" x2="0" y2="1">
                <stop offset="0" stopColor="#a35be8" />
                <stop offset="1" stopColor="#ee6a8a" />
              </linearGradient>
            </defs>
            <path d="M10 0h5.500q2 0 2.700 2L19.500 6h-6z" fill="#0c56a8" />
            <path d="M5.500 2.500Q6.500 0 9 0h5q-1.800.5-2.500 3L9 12q-1 3.500-4 3.500H2.500Q-.8 15 .5 11z" fill="url(#pilotLeft)" />
            <path d="M18 16.500q-1 2.500-3.500 2.500h-5q1.800-.5 2.500-3l2.500-7.500Q15.500 5.500 18 5.500h2.500q3.500.5 2.500 4z" fill="url(#pilotRight)" />
          </svg>
          <span className="absolute bottom-0 left-[5px] flex h-[9px] w-[19px] items-center justify-center rounded-[2px] bg-[#f2c40e] text-[7px] leading-[9px] font-bold">
            PRE
          </span>
        </div>
      </div>
    </footer>
  )
}

export default function App() {
  return (
    <div className="relative flex h-[900px] w-[1600px] flex-col overflow-hidden bg-white font-['Open_Sans',sans-serif]">
      <div className="bg-[#ffadbb]">
        <TabStrip />
        <AddressBar />
      </div>
      <FindBar />
      <Header />
      <Toolbar />
      <main className="flex h-[664px] shrink-0">
        <Canvas />
        <Panel />
      </main>
      <Taskbar />
    </div>
  )
}
